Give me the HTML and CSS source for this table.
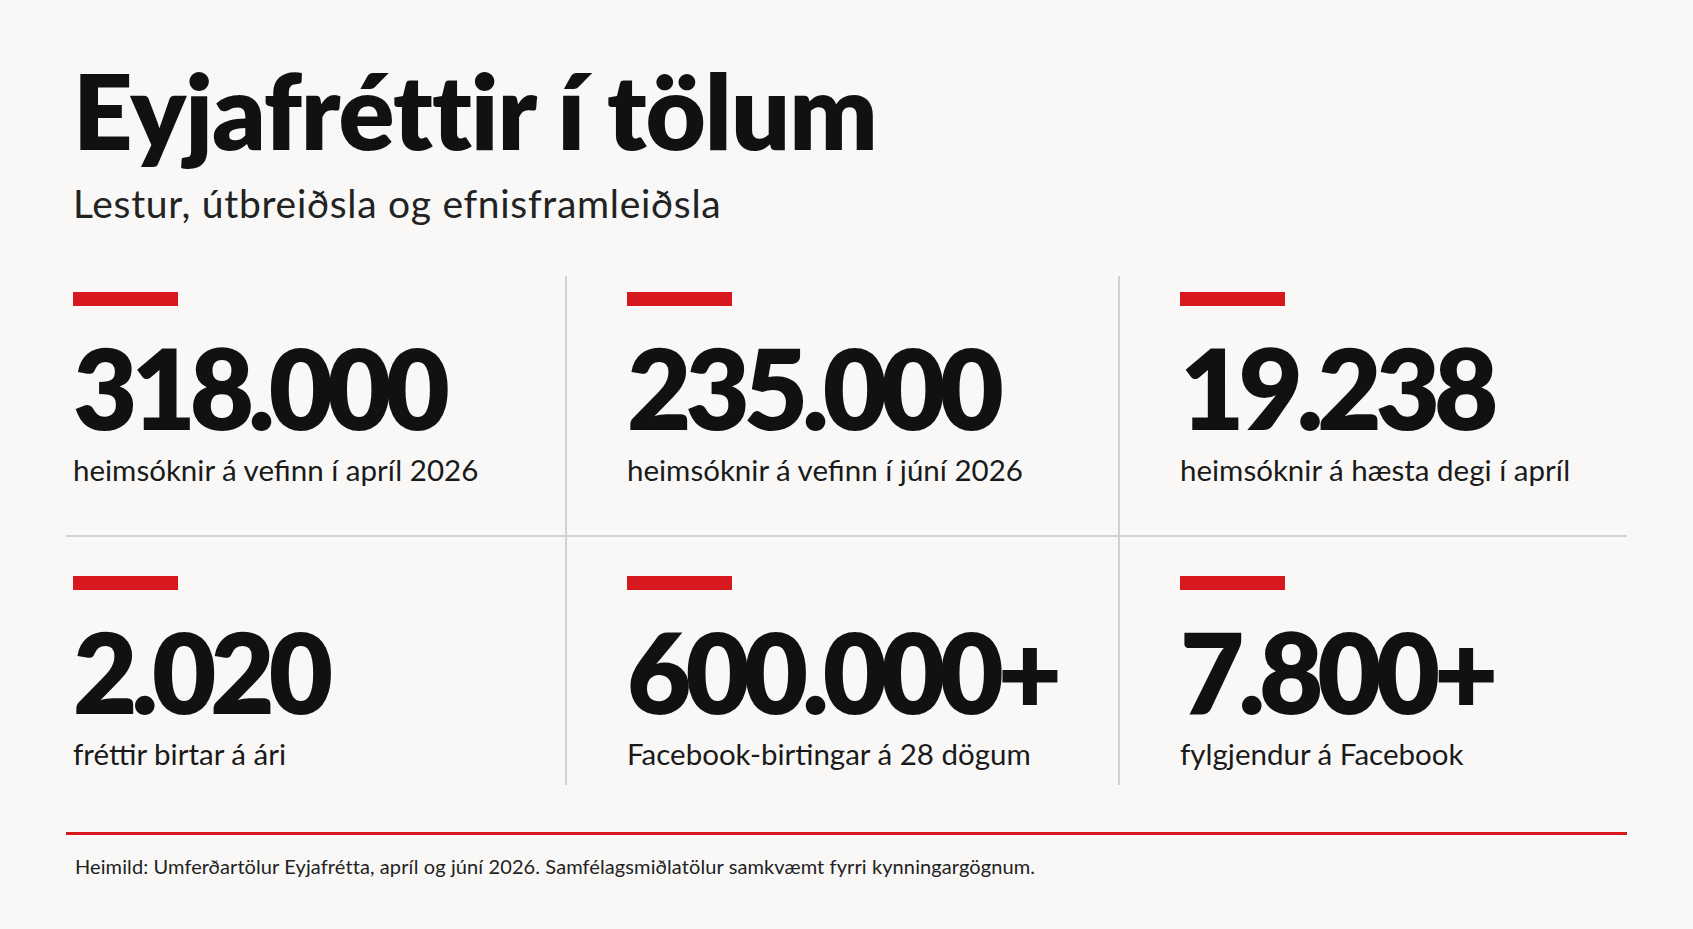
FILE: index.html
```html
<!DOCTYPE html>
<html lang="is">
<head>
<meta charset="utf-8">
<title>Eyjafréttir í tölum</title>
<link rel="stylesheet" href="styles.css">
</head>
<body>
<main class="page">
  <header class="head">
    <h1 class="title">Eyjafréttir í tölum</h1>
    <p class="subtitle">Lestur, útbreiðsla og efnisframleiðsla</p>
  </header>
  <section class="stats">
    <div class="cell row1 col1">
      <div class="bar"></div>
      <div class="num">318.000</div>
      <div class="label">heimsóknir á vefinn í apríl 2026</div>
    </div>
    <div class="cell row1 col2">
      <div class="bar"></div>
      <div class="num">235.000</div>
      <div class="label">heimsóknir á vefinn í júní 2026</div>
    </div>
    <div class="cell row1 col3">
      <div class="bar"></div>
      <div class="num">19.238</div>
      <div class="label">heimsóknir á hæsta degi í apríl</div>
    </div>
    <div class="cell row2 col1">
      <div class="bar"></div>
      <div class="num">2.020</div>
      <div class="label">fréttir birtar á ári</div>
    </div>
    <div class="cell row2 col2">
      <div class="bar"></div>
      <div class="num">600.000+</div>
      <div class="label">Facebook-birtingar á 28 dögum</div>
    </div>
    <div class="cell row2 col3">
      <div class="bar"></div>
      <div class="num">7.800+</div>
      <div class="label">fylgjendur á Facebook</div>
    </div>
  </section>
  <footer class="foot">
    <p class="source">Heimild: Umferðartölur Eyjafrétta, apríl og júní 2026. Samfélagsmiðlatölur samkvæmt fyrri kynningargögnum.</p>
  </footer>
</main>
</body>
</html>
```

FILE: styles.css
```css
html, body {
  margin: 0;
  padding: 0;
  background: #f9f8f6;
}
body {
  font-family: Lato, "Noto Sans", "Liberation Sans", sans-serif;
  color: #111;
  width: 1693px;
  height: 929px;
  overflow: hidden;
}
.page {
  padding: 0 66px;
}
.head {
  padding-left: 7px;
  padding-top: 52px;
}
.title {
  margin: 0;
  font-size: 104px;
  font-weight: 800;
  line-height: 116px;
  letter-spacing: -1px;
  color: #111;
}
.subtitle {
  margin: 13px 0 0 0;
  font-size: 39px;
  line-height: 44px;
  font-weight: 400;
  letter-spacing: 0.7px;
  color: #222;
}
.stats {
  margin-top: 51px;
  display: grid;
  grid-template-columns: 501px 553px 507px;
  grid-template-rows: 261px 248px;
}
.cell {
  padding-left: 60px;
}
.col1 { padding-left: 7px; border-right: 2px solid #d2d2d2; }
.col2 { border-right: 2px solid #d2d2d2; }
.row1 { padding-top: 16px; border-bottom: 2px solid #d2d2d2; }
.row2 { padding-top: 39px; }
.bar {
  width: 105px;
  height: 14px;
  background: #d7181f;
}
.num {
  margin-top: 25px;
  font-size: 111px;
  font-weight: 800;
  line-height: 112px;
  letter-spacing: -6px;
  color: #111;
}
.label {
  margin-top: 9px;
  font-size: 29.5px;
  line-height: 36px;
  color: #1a1a1a;
}
.foot {
  margin-top: 47px;
  border-top: 3px solid #d7181f;
}
.source {
  margin: 19px 0 0 9px;
  font-size: 20px;
  line-height: 24px;
  letter-spacing: 0.1px;
  color: #222;
}
```
